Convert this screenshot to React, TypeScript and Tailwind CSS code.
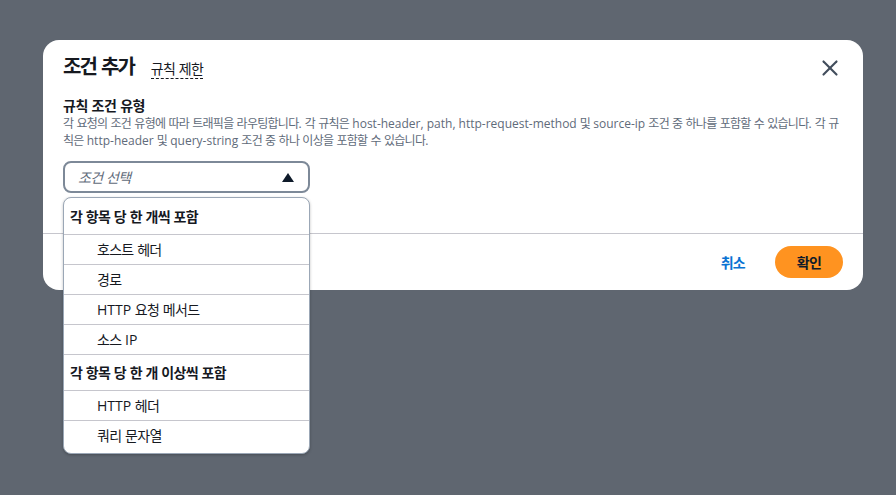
import { X } from "lucide-react";

const GROUPS = [
  { label: "각 항목 당 한 개씩 포함", items: ["호스트 헤더", "경로", "HTTP 요청 메서드", "소스 IP"] },
  { label: "각 항목 당 한 개 이상씩 포함", items: ["HTTP 헤더", "쿼리 문자열"] },
];

// Hangul glyphs in the reference are narrower than Noto's full-width ones,
// so runs of Hangul get a little negative tracking.
function Ko({ text, tight = "tracking-[-0.05em]" }: { text: string; tight?: string }) {
  const parts = text.split(/([\uac00-\ud7a3]+)/);
  return (
    <span>
      {parts.map((p, i) =>
        i % 2 === 1 ? (
          <span key={i} className={tight}>
            {p}
          </span>
        ) : (
          p
        )
      )}
    </span>
  );
}

export default function App() {
  return (
    <div
      className="min-h-screen w-full bg-[#5f6670] pt-[40px] pl-[43px]"
      style={{ fontFamily: '"Open Sans", "Noto Sans CJK KR", sans-serif' }}
    >
      <div className="relative h-[250px] w-[820px] rounded-[16px] bg-white text-[#16191f]">
        {/* Header */}
        <div className="flex h-[41px] items-end justify-between px-[20px]">
          <div className="flex items-baseline gap-[17px]">
            <h1 className="text-[20px] font-bold leading-[28px]">
              <Ko text="조건 추가" tight="tracking-[-0.1em]" />
            </h1>
            <span className="border-b border-dashed border-[#16191f] text-[14px] leading-[18px]">
              <Ko text="규칙 제한" />
            </span>
          </div>
          <button className="text-[#414d5c]">
            <X size={26} strokeWidth={2} />
          </button>
        </div>

        {/* Body */}
        <div className="h-[152px] px-[20px] pt-[16px]">
          <div className="text-[14px] font-bold leading-[18px]">
            <Ko text="규칙 조건 유형" tight="tracking-[-0.03em]" />
          </div>
          <p className="text-[12px] leading-[17px] text-[#5f6b7a]">
            <Ko
              text="각 요청의 조건 유형에 따라 트래픽을 라우팅합니다. 각 규칙은 host-header, path, http-request-method 및 source-ip 조건 중 하나를 포함할 수 있습니다. 각 규칙은 http-header 및 query-string 조건 중 하나 이상을 포함할 수 있습니다."
              tight="tracking-[-0.06em]"
            />
          </p>
          <div className="mt-[12px] flex h-[32px] w-[247px] items-center justify-between rounded-[8px] border-2 border-[#7d8998] pl-[13px] pr-[14px]">
            <span className="text-[14px] italic text-[#5f6b7a]">
              <Ko text="조건 선택" />
            </span>
            <svg width="12" height="9" viewBox="0 0 12 9">
              <path d="M6 0 L12 9 L0 9 Z" fill="#0f1b2a" />
            </svg>
          </div>
        </div>

        {/* Footer */}
        <div className="flex h-[57px] items-center justify-end gap-[20px] border-t border-[#c6c6cd] pr-[20px]">
          <button className="px-[10px] text-[14px] font-bold text-[#0972d3]">
            <Ko text="취소" />
          </button>
          <button className="h-[32px] w-[68px] rounded-full bg-[#ff9320] text-[14px] font-bold text-[#0f1b2a]">
            <Ko text="확인" />
          </button>
        </div>

        {/* Dropdown */}
        <div className="absolute left-[20px] top-[157px] w-[247px] overflow-hidden rounded-[8px] border border-[#9ba7b6] bg-white shadow-[0_1px_3px_rgba(0,0,0,0.25)]">
          {GROUPS.map((g, gi) => (
            <div key={g.label}>
              <div
                className={`flex h-[36px] items-center pl-[6px] text-[14px] font-bold ${gi > 0 ? "border-t border-[#c6c6cd]" : ""}`}
              >
                <Ko text={g.label} />
              </div>
              {g.items.map((item) => (
                <div key={item} className="flex h-[30px] items-center border-t border-[#c6c6cd] pl-[33px] text-[14px]">
                  <Ko text={item} />
                </div>
              ))}
            </div>
          ))}
          <div className="h-[3px]" />
        </div>
      </div>
    </div>
  );
}
